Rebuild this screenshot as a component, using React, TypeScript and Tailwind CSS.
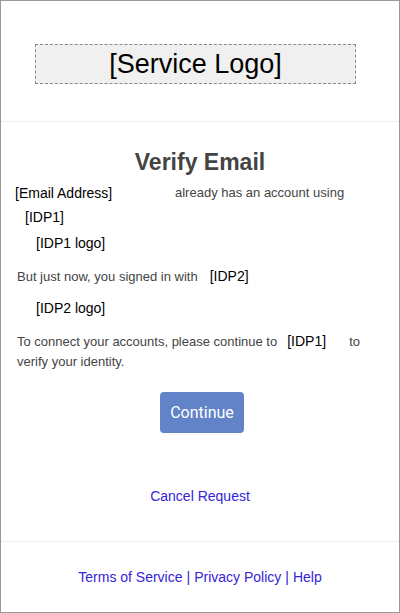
export default function App() {
  return (
    <div className="w-[400px] h-[613px] border border-[#999] bg-white font-['Liberation_Sans',Arial,sans-serif] flex flex-col">
      <header className="h-[121px] pt-[43px] border-b border-[#eee]">
        <div className="ml-[34px] w-[321px] h-[40px] border border-dashed border-[#888] bg-[#f0f0f0] flex items-center justify-center text-[27px] text-black leading-none">
          [Service Logo]
        </div>
      </header>

      <main className="flex-1 flex flex-col">
        <h1 className="mt-[27px] text-center text-[23px] font-bold text-[#444] leading-[26px]">Verify Email</h1>

        <div className="mt-[9px] flex items-center h-[18px]">
          <span className="ml-[14px] w-[160px] text-[14px] text-black">[Email Address]</span>
          <span className="text-[13px] text-[#444]">already has an account using</span>
        </div>
        <div className="mt-[6px] ml-[24px] h-[18px] text-[14px] text-black leading-[18px]">[IDP1]</div>
        <div className="mt-[8px] ml-[35px] h-[18px] text-[14px] text-black leading-[18px]">[IDP1 logo]</div>

        <div className="mt-[16px] flex items-center h-[18px]">
          <span className="ml-[16px] text-[13px] text-[#444]">But just now, you signed in with</span>
          <span className="ml-[12px] text-[14px] text-black -mt-[2px]">[IDP2]</span>
        </div>
        <div className="mt-[13px] ml-[35px] h-[18px] text-[14px] text-black leading-[18px]">[IDP2 logo]</div>

        <div className="mt-[15px] ml-[16px] mr-[20px] text-[13px] text-[#444] leading-[20px]">
          <div className="flex items-center">
            <span>To connect your accounts, please continue to</span>
            <span className="ml-[10px] w-[62px] text-[14px] text-black -mt-[2px]">[IDP1]</span>
            <span>to</span>
          </div>
          <div>verify your identity.</div>
        </div>

        <div className="mt-[20px] flex justify-center">
          <button className="ml-[4px] w-[84px] h-[41px] rounded-[4px] bg-[#6283c8] text-white text-[16px] font-['Roboto',sans-serif]">
            Continue
          </button>
        </div>

        <div className="mt-[51px] text-center">
          <a href="#" className="text-[14px] text-[#3424d8]">Cancel Request</a>
        </div>
      </main>

      <footer className="h-[71px] border-t border-[#eee] flex items-center justify-center text-[14px] text-[#3424d8]">
        <a href="#">Terms of Service</a>
        <span className="mx-[4px]">|</span>
        <a href="#">Privacy Policy</a>
        <span className="mx-[4px]">|</span>
        <a href="#">Help</a>
      </footer>
    </div>
  )
}
